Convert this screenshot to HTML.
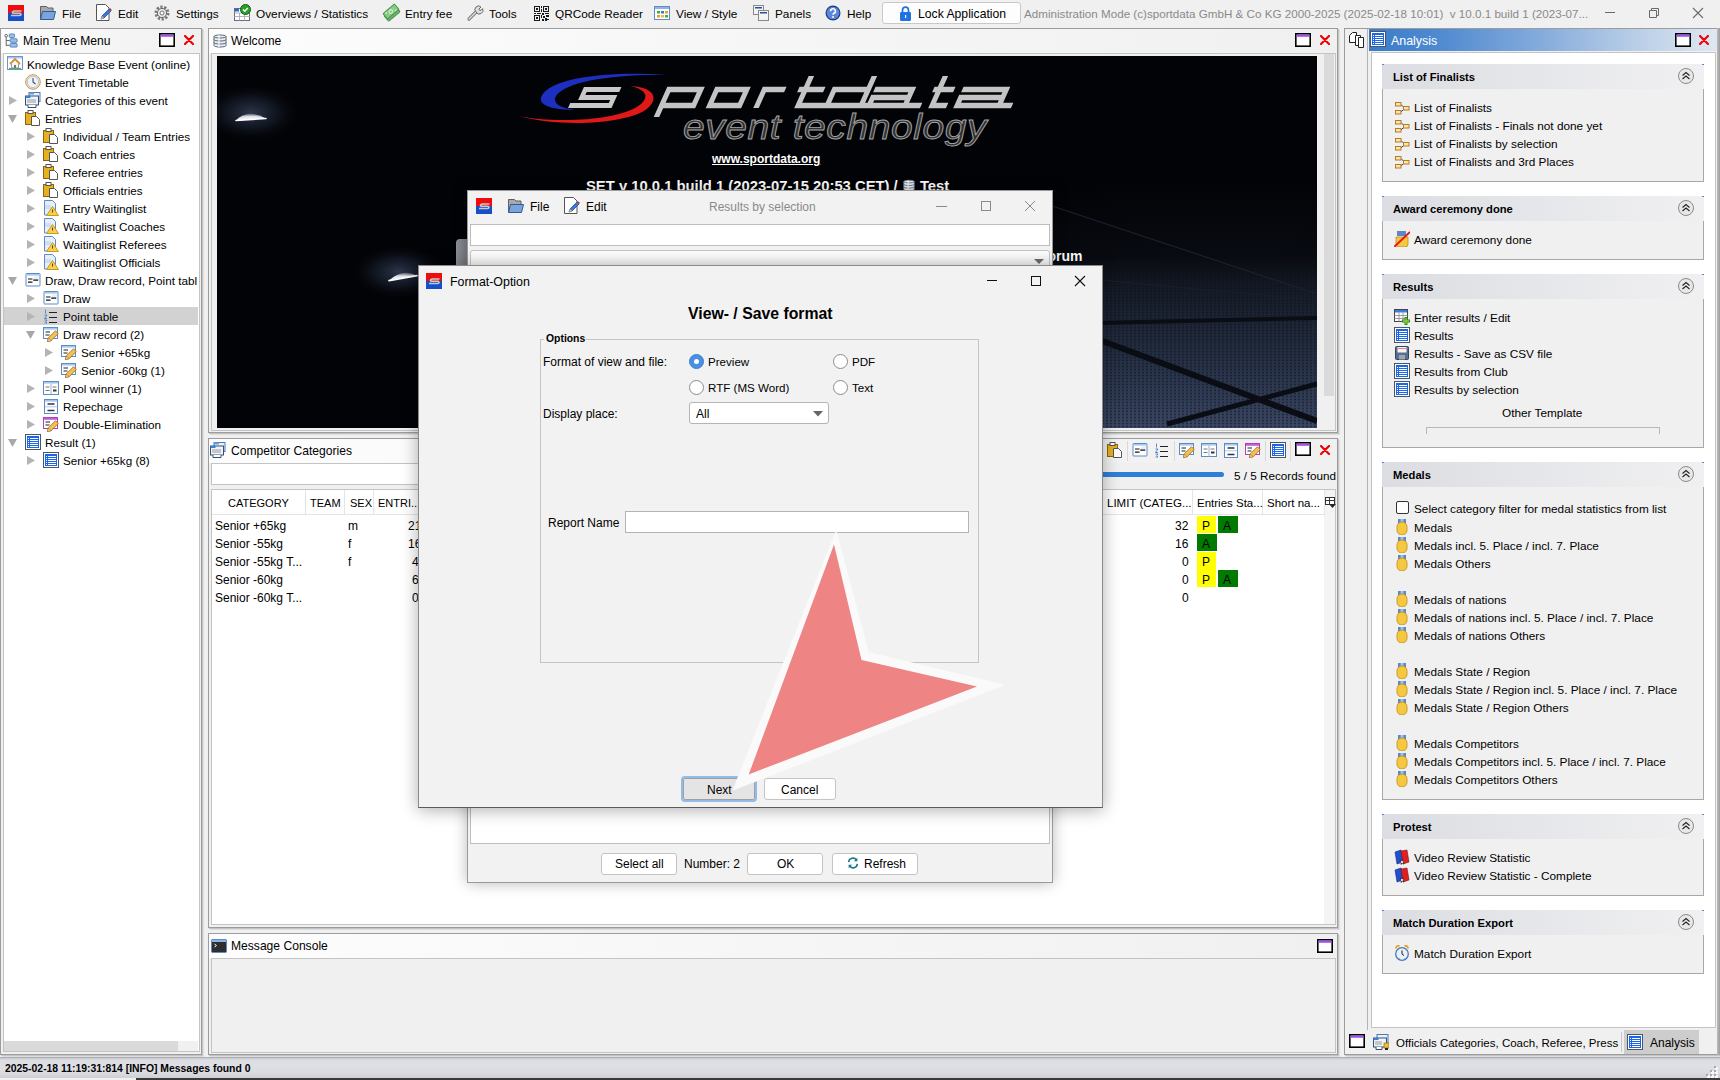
<!DOCTYPE html>
<html><head><meta charset="utf-8">
<style>
*{box-sizing:border-box;margin:0;padding:0}
html,body{width:1720px;height:1080px;overflow:hidden;background:#f0f0f0;font-family:"Liberation Sans",sans-serif;font-size:12px;color:#000}
.a{position:absolute}
.t{position:absolute;white-space:nowrap;line-height:14px}
.ic{position:absolute;width:16px;height:16px}
svg{position:absolute;overflow:visible}
.panel{position:absolute;background:#f0f0f0;border:1px solid #9c9c9c;box-shadow:1px 1px 0 #c4c4c4,2px 2px 0 #dedede}
.phdr{position:absolute;left:0;right:0;top:0;height:24px;background:linear-gradient(90deg,#fdfdfd 0%,#f8f8f8 35%,#f0f0f0 100%)}
.box{position:absolute;border:1px solid #c4c4c4;background:#fff}
.maxi{position:absolute;width:16px;height:14px;border:2px solid #000;background:#fff}
.maxi:before{content:"";position:absolute;left:0;right:0;top:0;height:3px;background:#a64ff0}
</style></head><body>
<svg width="0" height="0" style="position:absolute">
<defs>
<symbol id="i-tree" viewBox="0 0 16 16"><path d="M2.5 3v11M2.5 8h4M2.5 13.5h4" stroke="#555" fill="none"/><circle cx="2.5" cy="2.5" r="1.5" fill="#fff" stroke="#555"/><rect x="6" y="0.5" width="6" height="4" rx="1" fill="#9cc0ec" stroke="#4a7ab8"/><rect x="7" y="6" width="8" height="4" rx="1" fill="#9cc0ec" stroke="#4a7ab8"/><rect x="7" y="11.5" width="8" height="4" rx="1" fill="#9cc0ec" stroke="#4a7ab8"/></symbol>
<symbol id="i-house" viewBox="0 0 16 16"><rect x=".5" y=".5" width="15" height="13" fill="#fff" stroke="#6b96d0"/><rect x="1" y="1" width="14" height="1.5" fill="#a9c6ee"/><path d="M3 8l5-5 5 5" stroke="#d8893a" stroke-width="1.8" fill="none"/><path d="M4.5 8v4h7V8" fill="#f4f4f4" stroke="#888" stroke-width=".8"/><rect x="7" y="9" width="2" height="3" fill="#777"/><path d="M2 12.5h12" stroke="#5ab05a" stroke-width="1.2"/></symbol>
<symbol id="i-clock" viewBox="0 0 16 16"><circle cx="8" cy="8" r="7.3" fill="#f2e3c8" stroke="#c9965a"/><circle cx="8" cy="8" r="5.6" fill="#eef4fb" stroke="#9bb0c8" stroke-width=".6"/><path d="M8 4v4l2.5 2" stroke="#34506e" stroke-width="1.1" fill="none"/></symbol>
<symbol id="i-cats" viewBox="0 0 16 16"><rect x="4" y=".5" width="11" height="9" fill="#e8f0fa" stroke="#4a7ab8"/><rect x="4" y=".5" width="5" height="2" fill="#6aa0e0"/><rect x=".5" y="4" width="13" height="9" fill="#f0f4fa" stroke="#34506e"/><rect x=".5" y="4" width="5" height="2" fill="#3b80d8"/><path d="M2 8h9M2 10h9" stroke="#999"/><path d="M3 13v2.5h8V13" fill="#fff" stroke="#34506e"/></symbol>
<symbol id="i-clip" viewBox="0 0 16 16"><rect x=".5" y="2.5" width="10" height="12" fill="#e8b020" stroke="#8a6410"/><rect x="3" y=".5" width="5" height="3" fill="#fff" stroke="#555"/><path d="M6.5 6.5h5l3 3v6h-8z" fill="#fff" stroke="#555"/></symbol>
<symbol id="i-wait" viewBox="0 0 16 16"><path d="M1.5 .5h8l3 3v11.5h-11z" fill="#e6eefa" stroke="#5b8bc8"/><path d="M2 6h6M2 8h6" stroke="#b8cce8"/><path d="M9.5 6.5l6 9h-12z" fill="#f8d050" stroke="#c89a20"/><path d="M9.5 9.5v3" stroke="#604010"/></symbol>
<symbol id="i-draw" viewBox="0 0 16 16"><rect x="1" y="1.5" width="14" height="12.5" rx=".5" fill="#fff" stroke="#5b8bc8"/><rect x="1.5" y="2" width="13" height="1.6" fill="#a9c6ee"/><rect x="9" y="4.5" width="5" height="4" fill="#e6eef8"/><path d="M3 7h4.5M8.2 8.2h5M3 10.2h4.5" stroke="#111" stroke-width="1.2"/></symbol>
<symbol id="i-points" viewBox="0 0 16 16"><path d="M6 4.5h8M6 9.5h8M6 14.5h8" stroke="#222" stroke-width="1.1"/><path d="M2.5 1.5v4M1.5 7h2.5l-2.5 3.5h2.5M1.5 12h2.5l-1.2 1.5 1.2 1.5H1.5" stroke="#4a80c8" stroke-width=".9" fill="none"/></symbol>
<symbol id="i-drec" viewBox="0 0 16 16"><rect x=".5" y="1.5" width="14" height="11" fill="#fff" stroke="#5b8bc8"/><rect x="1" y="2" width="13" height="1.6" fill="#a9c6ee"/><path d="M2.5 6h4.5M2.5 9h4" stroke="#222" stroke-width="1.1"/><path d="M4.5 15.5l.8-3.6 7.2-7.2 2.8 2.8-7.2 7.2z" fill="#f4c050" stroke="#9a6a18" stroke-width=".8"/><path d="M4.5 15.5l.8-3.6 2.8 2.8z" fill="#f8e0b0" stroke="#9a6a18" stroke-width=".6"/></symbol>
<symbol id="i-dbl" viewBox="0 0 16 16"><rect x=".5" y="1.5" width="14" height="11" fill="#fff" stroke="#b040c0"/><rect x="1" y="2" width="13" height="1.8" fill="#c060d8"/><path d="M2.5 6h4.5M2.5 9h4" stroke="#222" stroke-width="1.1"/><path d="M4.5 15.5l.8-3.6 7.2-7.2 2.8 2.8-7.2 7.2z" fill="#f4c050" stroke="#9a6a18" stroke-width=".8"/><path d="M4.5 15.5l.8-3.6 2.8 2.8z" fill="#f8e0b0" stroke="#9a6a18" stroke-width=".6"/></symbol>
<symbol id="i-pool" viewBox="0 0 16 16"><rect x=".5" y="1.5" width="15" height="13" fill="#fff" stroke="#5b8bc8"/><rect x="1" y="2" width="14" height="1.6" fill="#a9c6ee"/><path d="M8 3.5v11" stroke="#9ab4d8"/><path d="M2.5 7h4M2.5 10.5h4M9.5 7h4" stroke="#777"/><rect x="10" y="9.5" width="3.5" height="2" fill="#333"/></symbol>
<symbol id="i-rep" viewBox="0 0 16 16"><rect x="1.5" y="1.5" width="13" height="14" fill="#fff" stroke="#5b8bc8"/><rect x="2" y="2" width="12" height="1.6" fill="#a9c6ee"/><rect x="2" y="8" width="12" height="1.4" fill="#c4d8f2"/><path d="M4.5 6h7M4.5 12.5h7" stroke="#333" stroke-width="1.4"/></symbol>
<symbol id="i-result" viewBox="0 0 16 16"><rect x=".5" y=".5" width="15" height="15" fill="#fff" stroke="#4a5666"/><rect x="2" y="2" width="12" height="12" fill="#1a66e6"/><path d="M3 4.5h1M5 4.5h8M3 6.5h1M5 6.5h8M3 8.5h1M5 8.5h8M3 10.5h1M5 10.5h8M3 12.5h1M5 12.5h8" stroke="#fff" stroke-width="1"/></symbol>
<symbol id="i-arrR" viewBox="0 0 8 9"><path d="M0 0l8 4.5-8 4.5z" fill="#b4b4b4"/></symbol>
<symbol id="i-arrD" viewBox="0 0 9 8"><path d="M0 0h9l-4.5 8z" fill="#a8a8a8"/></symbol>
<symbol id="i-db" viewBox="0 0 16 16"><path d="M2 3.5c0-2 12-2 12 0v9c0 2-12 2-12 0z" fill="#e8ecf0" stroke="#5a6a7a"/><path d="M2 3.5c0 2 12 2 12 0M2 6.5c0 2 12 2 12 0M2 9.5c0 2 12 2 12 0" stroke="#5a6a7a" fill="none"/><path d="M7 2v12" stroke="#fff" stroke-width="1.5" opacity=".7"/></symbol>
<symbol id="i-x" viewBox="0 0 10 10"><path d="M1 1l8 8M9 1l-8 8" stroke="#f00000" stroke-width="2.2" stroke-linecap="round"/></symbol>
<symbol id="i-max" viewBox="0 0 16 14"><rect x=".8" y=".8" width="14.4" height="12.4" fill="#fff" stroke="#000" stroke-width="1.6"/><rect x="1.6" y="1.6" width="12.8" height="2.2" fill="#a64ff0"/></symbol>
<symbol id="i-console" viewBox="0 0 16 14"><rect x=".5" y=".5" width="15" height="13" rx="1" fill="#2e2e2e" stroke="#5b8bc8"/><rect x="1" y="1" width="14" height="2" fill="#8fb4e0"/><path d="M3.5 5l2 1.5-2 1.5" stroke="#fff" fill="none"/></symbol>
<symbol id="i-fin" viewBox="0 0 16 16"><path d="M7 5.5l2.5 2.5M7 13l2.5-2.5" stroke="#1a4a9a" stroke-width="1"/><rect x="1.5" y="3.5" width="5.5" height="3.5" fill="#fbe7a0" stroke="#b8782a"/><rect x="9.5" y="7.5" width="5.5" height="3.5" fill="#fbe7a0" stroke="#b8782a"/><rect x="1.5" y="11.5" width="5.5" height="3.5" fill="#fbe7a0" stroke="#b8782a"/></symbol>
<symbol id="i-medal" viewBox="0 0 16 16"><rect x="4" y="0" width="8" height="5" fill="#5a88c8"/><rect x="6.5" y="0" width="3" height="5" fill="#9ec0f0"/><path d="M3 7.5a5 4.5 0 0 1 10 0v4a5 4.5 0 0 1-10 0z" fill="#f4c840" stroke="#c08a10" stroke-width=".8"/></symbol>
<symbol id="i-csv" viewBox="0 0 16 16"><rect x="1.5" y="1.5" width="13" height="13" rx="1" fill="#5a6e90" stroke="#34445e"/><rect x="3.5" y="2" width="9" height="5.5" fill="#f4f4f4"/><rect x="3.5" y="3" width="9" height="1" fill="#e88080"/><rect x="5" y="10" width="6" height="4.5" fill="#9aa4b4"/></symbol>
<symbol id="i-enter" viewBox="0 0 16 16"><rect x=".5" y=".5" width="13" height="12" fill="#fff" stroke="#444"/><rect x="1" y="1" width="12" height="2.5" fill="#3b80d8"/><path d="M.5 6.5h13M.5 9.5h13M5 3.5v9M9 3.5v9" stroke="#888" stroke-width=".8"/><path d="M12 8v8M8 12h8" stroke="#2a8a1a" stroke-width="3"/><path d="M12 9v6M9 12h6" stroke="#8ad040" stroke-width="1.3"/></symbol>
<symbol id="i-award" viewBox="0 0 16 16"><rect x="3" y="0" width="9" height="5" fill="#5a88c8"/><path d="M2 6h12v7a3 3 0 0 1-3 3H5a3 3 0 0 1-3-3z" fill="#f4c840" stroke="#c08a10" stroke-width=".8"/><path d="M0 16L16 1" stroke="#f01010" stroke-width="2"/></symbol>
<symbol id="i-video" viewBox="0 0 16 16"><path d="M1 3l6-2 2 12-6 2z" fill="#2050d0" stroke="#102a80" stroke-width=".6"/><path d="M7 2l6-1 2 12-6 2z" fill="#e02020" stroke="#801010" stroke-width=".6"/><path d="M6 11l4 4M9 10.5l-2 5" stroke="#333" stroke-width="1.3"/><circle cx="8" cy="13" r="1.2" fill="#ddd"/></symbol>
<symbol id="i-alarm" viewBox="0 0 16 16"><circle cx="8" cy="9" r="6.3" fill="#e8f0fa" stroke="#4a7ab8" stroke-width="1.3"/><path d="M2 3.5a2.5 2.5 0 0 1 3.5-2.5M14 3.5a2.5 2.5 0 0 0-3.5-2.5" stroke="#e8a020" stroke-width="1.8" fill="none"/><path d="M8 5.5v3.5l2 1.5" stroke="#222" fill="none"/><path d="M4 15l1.5-1.5M12 15l-1.5-1.5" stroke="#4a7ab8"/></symbol>
<symbol id="i-collapse" viewBox="0 0 16 16"><circle cx="8" cy="8" r="7.5" fill="#e8e8e8" stroke="#8a8a8a"/><path d="M4.5 7.5l3.5-3 3.5 3M4.5 11l3.5-3 3.5 3" stroke="#222" stroke-width="1.1" fill="none"/></symbol>
<symbol id="i-copy" viewBox="0 0 16 16"><path d="M3.5 .5h4v10h-7v-7z" fill="#fff" stroke="#222"/><path d="M6.5 3.5h5v10h-5z" fill="#fff" stroke="#222"/><path d="M9.5 5.5h5v10h-5z" fill="#fff" stroke="#222"/></symbol>
<symbol id="i-offcats" viewBox="0 0 16 16"><rect x="4" y=".5" width="11" height="9" fill="#e8f0fa" stroke="#4a7ab8"/><rect x=".5" y="4" width="13" height="9" fill="#f0f4fa" stroke="#34506e"/><rect x=".5" y="4" width="5" height="2" fill="#3b80d8"/><path d="M2 8h7M2 10h7" stroke="#999"/><path d="M3 13v2.5h6V13" fill="#fff" stroke="#34506e"/><rect x="11" y="9" width="5" height="5" fill="#f0c030" stroke="#806010" stroke-width=".6"/><path d="M12 14v2h3v-2" fill="#222"/></symbol>
<symbol id="i-refresh" viewBox="0 0 16 16"><path d="M3 7a5 5 0 0 1 9-2.5" stroke="#1a7a8a" stroke-width="1.8" fill="none"/><path d="M13 2v4h-4z" fill="#1a7a8a"/><path d="M13 9a5 5 0 0 1-9 2.5" stroke="#1a7a8a" stroke-width="1.8" fill="none"/><path d="M3 14v-4h4z" fill="#1a7a8a"/></symbol>
<symbol id="i-colch" viewBox="0 0 11 11"><rect x=".5" y=".5" width="9" height="7" fill="#fff" stroke="#333"/><path d="M.5 3.5h9M4.5 .5v7" stroke="#333"/><path d="M4 7h7l-3.5 4z" fill="#222"/></symbol>
<symbol id="i-logo" viewBox="0 0 16 16"><rect width="16" height="8" fill="#f00c0c"/><rect y="8" width="16" height="8" fill="#1450c8"/><path d="M3 10.5h8.5c1.5 0 2-1 1.2-1.7L12 8.2h-6.5c-1.2 0-1.4-1.2-.4-1.6L6 6h7.5" stroke="#c8c8c8" stroke-width="1.6" fill="none"/></symbol>
<symbol id="i-folder" viewBox="0 0 16 16"><path d="M0.5 14.5V1.5h6l1.5 1.5h5v3" fill="#a8a8a8" stroke="#606060"/><path d="M0.5 14.5l2-8h13l-2 8z" fill="#7aa5dc" stroke="#2d5c9c"/></symbol>
<symbol id="i-edit" viewBox="0 0 16 17"><path d="M0.5 0.5h9l3.5 3.5v12.5h-12.5z" fill="#fff" stroke="#555"/><path d="M5 15l1-3 7-7 2 2-7 7z" fill="#3b78d8" stroke="#1d4a9a" stroke-width=".8"/><path d="M13 5l2 2 1-1-2-2z" fill="#e03030"/><path d="M5 15l1-3 2 2z" fill="#f0c070"/></symbol>
</defs></svg>

<!-- MENU BAR -->
<div id="menubar" class="a" style="left:0;top:0;width:1720px;height:28px;background:#f0f0f0">
  <svg style="left:8px;top:5px" width="16" height="16" viewBox="0 0 16 16"><rect width="16" height="8" fill="#f00c0c"/><rect y="8" width="16" height="8" fill="#1450c8"/><path d="M3 10.5h8.5c1.5 0 2-1 1.2-1.7L12 8.2h-6.5c-1.2 0-1.4-1.2-.4-1.6L6 6h7.5" stroke="#c8c8c8" stroke-width="1.6" fill="none"/></svg>
  <svg style="left:40px;top:5px" width="16" height="16" viewBox="0 0 16 16"><path d="M0.5 14.5V1.5h6l1.5 1.5h5v3" fill="#a8a8a8" stroke="#606060"/><path d="M0.5 14.5l2-8h13l-2 8z" fill="#7aa5dc" stroke="#2d5c9c"/></svg>
  <div class="t" style="top:7px;left:62px;font-size:11.8px">File</div>
  <svg style="left:96px;top:4px" width="16" height="17" viewBox="0 0 16 17"><path d="M0.5 0.5h9l3.5 3.5v12.5h-12.5z" fill="#fff" stroke="#555"/><path d="M5 15l1-3 7-7 2 2-7 7z" fill="#3b78d8" stroke="#1d4a9a" stroke-width=".8"/><path d="M13 5l2 2 1-1-2-2z" fill="#e03030"/><path d="M5 15l1-3 2 2z" fill="#f0c070"/></svg>
  <div class="t" style="top:7px;left:118px;font-size:11.8px">Edit</div>
  <svg style="left:154px;top:5px" width="16" height="16" viewBox="0 0 16 16"><circle cx="8" cy="8" r="6" fill="none" stroke="#7a7a7a" stroke-width="3" stroke-dasharray="2.2 1.5"/><circle cx="8" cy="8" r="4.6" fill="#e8e8e8" stroke="#6a6a6a"/><circle cx="8" cy="8" r="2" fill="#fff" stroke="#777"/></svg>
  <div class="t" style="top:7px;left:176px;font-size:11.8px">Settings</div>
  <svg style="left:234px;top:4px" width="17" height="17" viewBox="0 0 17 17"><rect x=".5" y="4.5" width="15" height="12" fill="#fff" stroke="#6a6a7a"/><path d="M.5 9h15M.5 12.5h15M5.5 9v7.5M10.5 9v7.5" stroke="#b0b4c0"/><rect x="1" y="5" width="4" height="2.5" fill="#2a6ad8"/><circle cx="11.5" cy="5.5" r="5" fill="#2aa02a" stroke="#106010"/><path d="M9 5.5l1.8 1.8 3-3.3" stroke="#fff" stroke-width="1.4" fill="none"/></svg>
  <div class="t" style="top:7px;left:256px;font-size:11.8px">Overviews / Statistics</div>
  <svg style="left:383px;top:5px" width="17" height="16" viewBox="0 0 17 16"><g transform="rotate(-40 8.5 8)"><rect x="1" y="5.5" width="15" height="7" rx="1" fill="#6ab86a" stroke="#4a944a"/><rect x="1.5" y="3" width="15" height="7" rx="1" fill="#8acb8a" stroke="#4a944a"/><circle cx="9" cy="6.5" r="1.8" fill="none" stroke="#d8f0d8"/><path d="M3.5 4.5h2M12.5 8.5h2" stroke="#d8f0d8"/></g></svg>
  <div class="t" style="top:7px;left:405px;font-size:11.8px">Entry fee</div>
  <svg style="left:467px;top:5px" width="16" height="16" viewBox="0 0 16 16"><path d="M2 14l7-7" stroke="#777" stroke-width="3.2" stroke-linecap="round"/><path d="M2 14l7-7" stroke="#ddd" stroke-width="1.4" stroke-linecap="round"/><path d="M9 7a3.5 3.5 0 1 1 5-5l-2.2 2.2.8 1.2 1.4-.2 1.6-1.6A3.5 3.5 0 0 1 9 7z" fill="#e0e0e0" stroke="#6a6a6a"/></svg>
  <div class="t" style="top:7px;left:489px;font-size:11.8px">Tools</div>
  <svg style="left:534px;top:6px" width="15" height="15" viewBox="0 0 15 15"><path d="M0 0h6v6h-6zM1 1v4h4v-4zM2 2h2v2h-2zM9 0h6v6h-6zM10 1v4h4v-4zM11 2h2v2h-2zM0 9h6v6h-6zM1 10v4h4v-4zM2 11h2v2h-2zM7 0h1v2h-1zM7 3h1v3h-1zM0 7h2v1h-2zM3 7h4v1h-4zM8 7h2v2h-2zM11 7h4v1h-4zM7 9h1v3h-1zM9 10h2v2h-2zM12 9h3v2h-3zM8 13h2v2h-2zM11 12h2v3h-2zM13 13h2v1h-2z" fill="#1a1a1a" fill-rule="evenodd"/></svg>
  <div class="t" style="top:7px;left:555px;font-size:11.8px">QRCode Reader</div>
  <svg style="left:654px;top:6px" width="16" height="14" viewBox="0 0 16 14"><rect x=".5" y=".5" width="15" height="13" fill="#fff" stroke="#5b8bc8"/><rect x="1" y="1" width="14" height="2" fill="#8fb4e0"/><rect x="3" y="5" width="3" height="2.5" fill="#4aa84a"/><rect x="7" y="5" width="3" height="2.5" fill="#3b78d8"/><rect x="11" y="5" width="3" height="2.5" fill="#e8a030"/><rect x="3" y="9" width="3" height="2.5" fill="#e8a030"/><rect x="7" y="9" width="3" height="2.5" fill="#e8c030"/><rect x="11" y="9" width="3" height="2.5" fill="#4aa84a"/></svg>
  <div class="t" style="top:7px;left:676px;font-size:11.8px">View / Style</div>
  <svg style="left:753px;top:5px" width="16" height="16" viewBox="0 0 16 16"><rect x=".5" y=".5" width="10" height="9" fill="#f4f4f4" stroke="#888"/><rect x="2" y="2" width="7" height="1.5" fill="#2a4f9a"/><rect x="5.5" y="5.5" width="10" height="10" fill="#f4f4f4" stroke="#888"/><rect x="7" y="7" width="7" height="1.5" fill="#2a4f9a"/></svg>
  <div class="t" style="top:7px;left:775px;font-size:11.8px">Panels</div>
  <svg style="left:825px;top:5px" width="16" height="16" viewBox="0 0 16 16"><circle cx="8" cy="8" r="7.5" fill="#1c3d8a"/><circle cx="8" cy="8" r="6.3" fill="#5d86d8"/><path d="M5.6 6.2a2.4 2.4 0 1 1 3.4 2.1c-.7.4-1 .8-1 1.5" stroke="#fff" stroke-width="1.6" fill="none"/><circle cx="8" cy="12" r="1" fill="#fff"/></svg>
  <div class="t" style="top:7px;left:847px;font-size:11.8px">Help</div>
  <div class="a" style="left:882px;top:2px;width:139px;height:22px;background:#fdfdfd;border:1px solid #c9c9c9;border-radius:3px"></div>
  <svg style="left:900px;top:6px" width="11" height="15" viewBox="0 0 11 15"><path d="M2.5 6.5V4.2a3 3 0 0 1 6 0v2.3" stroke="#1f73e0" stroke-width="1.7" fill="none"/><rect x="0" y="6" width="11" height="9" rx="1.2" fill="#1f73e0"/><rect x="5" y="9" width="1.2" height="3" fill="#fff"/></svg>
  <div class="t" style="top:7px;left:918px;font-size:12.2px">Lock Application</div>
  <div class="t" style="top:7px;left:1024px;color:#8a8a8a;font-size:11.65px">Administration Mode (c)sportdata GmbH &amp; Co KG 2000-2025 (2025-02-18 10:01)&nbsp; v 10.0.1 build 1 (2023-07...</div>
  <div class="a" style="left:1605px;top:12px;width:10px;height:1px;background:#6a6a6a"></div>
  <svg style="left:1649px;top:8px" width="10" height="10" viewBox="0 0 10 10"><path d="M.5 2.5h7v7h-7z M2.5 2.5v-2h7v7h-2" stroke="#6a6a6a" fill="none"/></svg>
  <svg style="left:1693px;top:8px" width="10" height="10" viewBox="0 0 10 10"><path d="M0 0l10 10M10 0l-10 10" stroke="#6a6a6a" stroke-width="1.1"/></svg>
</div>

<!-- LEFT PANEL -->
<div class="panel" style="left:0;top:28px;width:202px;height:1027px">
  <div class="phdr"></div>
  <svg class="ic" style="left:3px;top:4px;width:14px;height:15px"><use href="#i-tree"/></svg>
  <div class="t" style="left:22px;top:5px;font-size:12.1px">Main Tree Menu</div>
  <svg style="left:158px;top:4px" width="16" height="14"><use href="#i-max"/></svg>
  <svg style="left:183px;top:6px" width="10" height="10"><use href="#i-x"/></svg>
  <div class="box" style="left:2px;top:24px;width:197px;height:999px;overflow:hidden">
  </div>
  <div class="a" style="left:3px;top:1012px;width:194px;height:10px;background:#f0f0f0"></div>
  <div class="a" style="left:3px;top:1012px;width:174px;height:10px;background:#dadada"></div>
  <svg class="ic" style="left:6px;top:27px"><use href="#i-house"/></svg>
<div class="t" style="left:26px;top:29px;font-size:11.7px">Knowledge Base Event (online)</div>
<svg class="ic" style="left:24px;top:45px"><use href="#i-clock"/></svg>
<div class="t" style="left:44px;top:47px;font-size:11.7px">Event Timetable</div>
<svg style="left:8px;top:67px" width="8" height="9"><use href="#i-arrR"/></svg>
<svg class="ic" style="left:24px;top:63px"><use href="#i-cats"/></svg>
<div class="t" style="left:44px;top:65px;font-size:11.7px">Categories of this event</div>
<svg style="left:7px;top:86px" width="9" height="8"><use href="#i-arrD"/></svg>
<svg class="ic" style="left:24px;top:81px"><use href="#i-clip"/></svg>
<div class="t" style="left:44px;top:83px;font-size:11.7px">Entries</div>
<svg style="left:26px;top:103px" width="8" height="9"><use href="#i-arrR"/></svg>
<svg class="ic" style="left:42px;top:99px"><use href="#i-clip"/></svg>
<div class="t" style="left:62px;top:101px;font-size:11.7px">Individual / Team Entries</div>
<svg style="left:26px;top:121px" width="8" height="9"><use href="#i-arrR"/></svg>
<svg class="ic" style="left:42px;top:117px"><use href="#i-clip"/></svg>
<div class="t" style="left:62px;top:119px;font-size:11.7px">Coach entries</div>
<svg style="left:26px;top:139px" width="8" height="9"><use href="#i-arrR"/></svg>
<svg class="ic" style="left:42px;top:135px"><use href="#i-clip"/></svg>
<div class="t" style="left:62px;top:137px;font-size:11.7px">Referee entries</div>
<svg style="left:26px;top:157px" width="8" height="9"><use href="#i-arrR"/></svg>
<svg class="ic" style="left:42px;top:153px"><use href="#i-clip"/></svg>
<div class="t" style="left:62px;top:155px;font-size:11.7px">Officials entries</div>
<svg style="left:26px;top:175px" width="8" height="9"><use href="#i-arrR"/></svg>
<svg class="ic" style="left:42px;top:171px"><use href="#i-wait"/></svg>
<div class="t" style="left:62px;top:173px;font-size:11.7px">Entry Waitinglist</div>
<svg style="left:26px;top:193px" width="8" height="9"><use href="#i-arrR"/></svg>
<svg class="ic" style="left:42px;top:189px"><use href="#i-wait"/></svg>
<div class="t" style="left:62px;top:191px;font-size:11.7px">Waitinglist Coaches</div>
<svg style="left:26px;top:211px" width="8" height="9"><use href="#i-arrR"/></svg>
<svg class="ic" style="left:42px;top:207px"><use href="#i-wait"/></svg>
<div class="t" style="left:62px;top:209px;font-size:11.7px">Waitinglist Referees</div>
<svg style="left:26px;top:229px" width="8" height="9"><use href="#i-arrR"/></svg>
<svg class="ic" style="left:42px;top:225px"><use href="#i-wait"/></svg>
<div class="t" style="left:62px;top:227px;font-size:11.7px">Waitinglist Officials</div>
<svg style="left:7px;top:248px" width="9" height="8"><use href="#i-arrD"/></svg>
<svg class="ic" style="left:24px;top:243px"><use href="#i-draw"/></svg>
<div class="t" style="left:44px;top:245px;font-size:11.7px">Draw, Draw record, Point tabl</div>
<svg style="left:26px;top:265px" width="8" height="9"><use href="#i-arrR"/></svg>
<svg class="ic" style="left:42px;top:261px"><use href="#i-draw"/></svg>
<div class="t" style="left:62px;top:263px;font-size:11.7px">Draw</div>
<div class="a" style="left:3px;top:278px;width:194px;height:18px;background:#d2d2d2"></div>
<svg style="left:26px;top:283px" width="8" height="9"><use href="#i-arrR"/></svg>
<svg class="ic" style="left:42px;top:279px"><use href="#i-points"/></svg>
<div class="t" style="left:62px;top:281px;font-size:11.7px">Point table</div>
<svg style="left:25px;top:302px" width="9" height="8"><use href="#i-arrD"/></svg>
<svg class="ic" style="left:42px;top:297px"><use href="#i-drec"/></svg>
<div class="t" style="left:62px;top:299px;font-size:11.7px">Draw record (2)</div>
<svg style="left:44px;top:319px" width="8" height="9"><use href="#i-arrR"/></svg>
<svg class="ic" style="left:60px;top:315px"><use href="#i-drec"/></svg>
<div class="t" style="left:80px;top:317px;font-size:11.7px">Senior +65kg</div>
<svg style="left:44px;top:337px" width="8" height="9"><use href="#i-arrR"/></svg>
<svg class="ic" style="left:60px;top:333px"><use href="#i-drec"/></svg>
<div class="t" style="left:80px;top:335px;font-size:11.7px">Senior -60kg (1)</div>
<svg style="left:26px;top:355px" width="8" height="9"><use href="#i-arrR"/></svg>
<svg class="ic" style="left:42px;top:351px"><use href="#i-pool"/></svg>
<div class="t" style="left:62px;top:353px;font-size:11.7px">Pool winner (1)</div>
<svg style="left:26px;top:373px" width="8" height="9"><use href="#i-arrR"/></svg>
<svg class="ic" style="left:42px;top:369px"><use href="#i-rep"/></svg>
<div class="t" style="left:62px;top:371px;font-size:11.7px">Repechage</div>
<svg style="left:26px;top:391px" width="8" height="9"><use href="#i-arrR"/></svg>
<svg class="ic" style="left:42px;top:387px"><use href="#i-dbl"/></svg>
<div class="t" style="left:62px;top:389px;font-size:11.7px">Double-Elimination</div>
<svg style="left:7px;top:410px" width="9" height="8"><use href="#i-arrD"/></svg>
<svg class="ic" style="left:24px;top:405px"><use href="#i-result"/></svg>
<div class="t" style="left:44px;top:407px;font-size:11.7px">Result (1)</div>
<svg style="left:26px;top:427px" width="8" height="9"><use href="#i-arrR"/></svg>
<svg class="ic" style="left:42px;top:423px"><use href="#i-result"/></svg>
<div class="t" style="left:62px;top:425px;font-size:11.7px">Senior +65kg (8)</div>
</div>

<!-- WELCOME PANEL -->
<div class="panel" style="left:208px;top:28px;width:1130px;height:405px">
  <div class="phdr"></div>
  <svg class="ic" style="left:3px;top:4px"><use href="#i-db"/></svg>
  <div class="t" style="left:22px;top:5px;font-size:12.1px">Welcome</div>
  <svg style="left:1086px;top:4px" width="16" height="14"><use href="#i-max"/></svg>
  <svg style="left:1111px;top:6px" width="10" height="10"><use href="#i-x"/></svg>
  <div class="box" style="left:2px;top:24px;width:1125px;height:378px;background:#f0f0f0"></div>
  <div class="a" style="left:1115px;top:25px;width:10px;height:342px;background:#dadada"></div>
  <div id="wimg" class="a" style="left:8px;top:27px;width:1100px;height:372px;background:#020306;overflow:hidden">
    <div class="a" style="left:0;top:0;width:1100px;height:372px;background:radial-gradient(ellipse 500px 250px at 1000px 372px,rgba(40,52,78,.9),rgba(20,26,40,.5) 55%,rgba(0,0,0,0) 100%)"></div>
    <svg style="left:0;top:0" width="1100" height="372" viewBox="0 0 1100 372">
      <defs>
        <pattern id="mesh" width="4" height="3" patternUnits="userSpaceOnUse"><rect width="4" height="3" fill="none"/><circle cx="2" cy="1.5" r=".9" fill="#0a0e16" opacity=".6"/></pattern>
        <linearGradient id="floorg" x1="0" y1="0" x2="0" y2="1"><stop offset="0" stop-color="#07090e"/><stop offset=".22" stop-color="#161c28"/><stop offset=".6" stop-color="#252f44"/><stop offset="1" stop-color="#3a4764"/></linearGradient>
        <radialGradient id="flare"><stop offset="0" stop-color="#fff"/><stop offset=".35" stop-color="#d8dde8"/><stop offset="1" stop-color="#000" stop-opacity="0"/></radialGradient>
        <radialGradient id="glow"><stop offset="0" stop-color="#5a6c90" stop-opacity=".5"/><stop offset=".5" stop-color="#2a3650" stop-opacity=".35"/><stop offset="1" stop-color="#000" stop-opacity="0"/></radialGradient><radialGradient id="dome" cx=".5" cy="1" r="1"><stop offset="0" stop-color="#fff"/><stop offset=".6" stop-color="#dde1e8"/><stop offset="1" stop-color="#8a94a8" stop-opacity=".5"/></radialGradient>
      </defs>
      <path d="M540 212 L1100 198 L1100 372 L500 372 Z" fill="url(#floorg)"/>
      <path d="M540 212 L1100 198 L1100 372 L500 372 Z" fill="url(#mesh)"/>
      <path d="M835 150 L1100 238" stroke="#1c212b" stroke-width="1.2"/>
      <path d="M860 222 L1100 244" stroke="#1a202a" stroke-width="1"/>
      <path d="M880 267 L1100 262" stroke="#0a0d14" stroke-width="4"/>
      <path d="M880 283 L1100 365" stroke="#0a0d14" stroke-width="6"/>
      <path d="M1100 328 L950 368" stroke="#0a0d14" stroke-width="5"/>
      <ellipse cx="34" cy="57" rx="52" ry="30" fill="url(#glow)"/>
      <path d="M19 64.5 Q 30 52, 49 62.5 Z" fill="url(#dome)"/><path d="M19 64.5 L49 62.5" stroke="#fff" stroke-width="1.6" stroke-linecap="round"/>
      <ellipse cx="182" cy="216" rx="50" ry="28" fill="url(#glow)"/>
      <path d="M172 224.6 Q 185 212, 200 219.6 Z" fill="url(#dome)"/><path d="M172 224.6 L200 219.6" stroke="#fff" stroke-width="1.6" stroke-linecap="round"/>
      <ellipse cx="450" cy="230" rx="70" ry="25" fill="url(#glow)"/>
      <!-- logo -->
      <g transform="translate(-217,-56)">
        <path d="M541 98 C 545 80, 600 70, 667 75 C 610 74, 565 82, 556 96 C 552 103, 560 108, 575 110 C 555 110, 539 106, 541 98 Z" fill="#1c2fc0"/>
        <path d="M519 116 C 550 123, 620 122, 641 104 C 650 96, 645 89, 630 86 C 652 87, 660 97, 648 108 C 630 124, 560 128, 519 116 Z" fill="#e01818"/>
        <g transform="matrix(1,0,-0.45,1,48.6,0)" fill="none" stroke-linejoin="miter">
          <path d="M612 89.5 H577 V97.5 H609 V105.5 H568" stroke="#c8c8c8" stroke-width="5"/>
          <path d="M660.5 117 V89.5 H692.5 V105.5 H663 M708.5 89.5 H738.5 V105.5 H708.5 Z M756 108 V89.5 H777 M797 76 V105.5 H920 M790 89.5 H816 M860 76 V105.5 H826 V89.5 H860 M866 89.5 H904 V105.5 H868 V97.5 H904 M931 76 V105.5 H946 M925 89.5 H946 M954 89.5 H998 V105.5 H956 V97.5 H998 M998 105.5 H1011" stroke="#c4c4c4" stroke-width="5.5"/>
          
        </g>
      </g>
    </svg>
        <div class="t" style="left:466px;top:51px;font-size:35px;line-height:40px;color:#303030;-webkit-text-stroke:0.9px #a4a4a4;font-style:italic;letter-spacing:0.5px;transform:scaleX(1.115);transform-origin:0 0">event technology</div>
    <div class="t" style="left:495px;top:96px;font-size:12px;font-weight:bold;color:#fff;text-decoration:underline">www.sportdata.org</div>
    <div class="t" style="left:369px;top:122px;font-size:14.8px;line-height:16px;font-weight:bold;color:#fff">SET v 10.0.1 build 1 (2023-07-15 20:53 CET) / <svg style="position:relative;display:inline-block;vertical-align:-2px" width="14" height="15"><use href="#i-db"/></svg> Test</div>
    <div class="t" style="left:822px;top:193px;font-size:14px;font-weight:bold;color:#fff">Forum</div>
  </div>
</div>

<!-- COMPETITOR CATEGORIES PANEL -->
<div class="panel" style="left:208px;top:438px;width:1130px;height:490px">
  <div class="phdr"></div>
  <svg class="ic" style="left:1px;top:3px"><use href="#i-cats"/></svg>
  <div class="t" style="left:22px;top:5px;font-size:12.1px">Competitor Categories</div>
  <svg class="ic" style="left:898px;top:3px"><use href="#i-clip"/></svg>
  <div class="a" style="left:918px;top:2px;width:1px;height:20px;background:#d8d8d8"></div>
  <svg class="ic" style="left:923px;top:3px"><use href="#i-draw"/></svg>
  <svg class="ic" style="left:945px;top:3px"><use href="#i-points"/></svg>
  <div class="a" style="left:965px;top:2px;width:1px;height:20px;background:#d8d8d8"></div>
  <svg class="ic" style="left:970px;top:3px"><use href="#i-drec"/></svg>
  <svg class="ic" style="left:992px;top:3px"><use href="#i-pool"/></svg>
  <svg class="ic" style="left:1014px;top:3px"><use href="#i-rep"/></svg>
  <svg class="ic" style="left:1036px;top:3px"><use href="#i-dbl"/></svg>
  <div class="a" style="left:1056px;top:2px;width:1px;height:20px;background:#d8d8d8"></div>
  <svg class="ic" style="left:1061px;top:3px"><use href="#i-result"/></svg>
  <div class="a" style="left:1081px;top:2px;width:1px;height:20px;background:#d8d8d8"></div>
  <svg style="left:1086px;top:3px" width="16" height="14"><use href="#i-max"/></svg>
  <svg style="left:1111px;top:6px" width="10" height="10"><use href="#i-x"/></svg>
  <div class="box" style="left:2px;top:24px;width:880px;height:22px"></div>
  <div class="a" style="left:880px;top:33px;width:135px;height:5px;border-radius:3px;background:#2f7fd8"></div>
  <div class="t" style="left:1025px;top:30px;font-size:11.7px">5 / 5 Records found</div>
  <div class="box" style="left:2px;top:50px;width:1125px;height:436px"></div>
  <div class="a" style="left:3px;top:51px;width:1112px;height:25px;background:#fff;border-bottom:1px solid #e4e4e4"></div>
  <div class="a" style="left:1115px;top:51px;width:11px;height:434px;background:#f4f4f4"></div>
  <div class="a" style="left:96px;top:51px;width:1px;height:25px;background:#e4e4e4"></div>
  <div class="a" style="left:135px;top:51px;width:1px;height:25px;background:#e4e4e4"></div>
  <div class="a" style="left:164px;top:51px;width:1px;height:25px;background:#e4e4e4"></div>
  <div class="t" style="left:19px;top:57px;font-size:11px">CATEGORY</div>
  <div class="t" style="left:101px;top:57px;font-size:11px">TEAM</div>
  <div class="t" style="left:141px;top:57px;font-size:11px">SEX</div>
  <div class="t" style="left:169px;top:57px;font-size:11px">ENTRI...</div>
  <div class="a" style="left:983px;top:51px;width:1px;height:25px;background:#e4e4e4"></div>
  <div class="a" style="left:1053px;top:51px;width:1px;height:25px;background:#e4e4e4"></div>
  <div class="a" style="left:1115px;top:51px;width:1px;height:25px;background:#e4e4e4"></div>
  <div class="t" style="left:898px;top:57px;font-size:11.5px">LIMIT (CATEG...</div>
  <div class="t" style="left:988px;top:57px;font-size:11.5px">Entries Sta...</div>
  <div class="t" style="left:1058px;top:57px;font-size:11.5px">Short na...</div>
  <svg style="left:1116px;top:58px" width="11" height="11"><use href="#i-colch"/></svg>
  <div class="t" style="left:6px;top:80px">Senior +65kg</div>
  <div class="t" style="left:6px;top:98px">Senior -55kg</div>
  <div class="t" style="left:6px;top:116px">Senior -55kg T...</div>
  <div class="t" style="left:6px;top:134px">Senior -60kg</div>
  <div class="t" style="left:6px;top:152px">Senior -60kg T...</div>
  <div class="t" style="left:139px;top:80px">m</div>
  <div class="t" style="left:139px;top:98px">f</div>
  <div class="t" style="left:139px;top:116px">f</div>
  <div class="t" style="left:199px;top:80px">21</div>
  <div class="t" style="left:199px;top:98px">16</div>
  <div class="t" style="left:203px;top:116px">4</div>
  <div class="t" style="left:203px;top:134px">6</div>
  <div class="t" style="left:203px;top:152px">0</div>
  <div class="t" style="left:966px;top:80px">32</div>
  <div class="t" style="left:966px;top:98px">16</div>
  <div class="t" style="left:973px;top:116px">0</div>
  <div class="t" style="left:973px;top:134px">0</div>
  <div class="t" style="left:973px;top:152px">0</div>
  <div class="a" style="left:988px;top:77px;width:19px;height:17px;background:#ffff00"></div><div class="t" style="left:993px;top:80px">P</div>
  <div class="a" style="left:1009px;top:77px;width:20px;height:17px;background:#007a00"></div><div class="t" style="left:1014px;top:80px">A</div>
  <div class="a" style="left:988px;top:95px;width:20px;height:17px;background:#007a00"></div><div class="t" style="left:993px;top:98px">A</div>
  <div class="a" style="left:988px;top:113px;width:19px;height:18px;background:#ffff00"></div><div class="t" style="left:993px;top:116px">P</div>
  <div class="a" style="left:988px;top:131px;width:19px;height:17px;background:#ffff00"></div><div class="t" style="left:993px;top:134px">P</div>
  <div class="a" style="left:1009px;top:131px;width:20px;height:17px;background:#007a00"></div><div class="t" style="left:1014px;top:134px">A</div>
</div>

<!-- MESSAGE CONSOLE -->
<div class="panel" style="left:208px;top:933px;width:1130px;height:122px">
  <div class="phdr"></div>
  <svg style="left:2px;top:5px" width="16" height="14"><use href="#i-console"/></svg>
  <div class="t" style="left:22px;top:5px;font-size:12.1px">Message Console</div>
  <svg style="left:1108px;top:5px" width="16" height="14"><use href="#i-max"/></svg>
  <div class="box" style="left:2px;top:24px;width:1125px;height:95px;background:#f0f0f0"></div>
</div>

<!-- RIGHT PANEL -->
<div class="panel" style="left:1344px;top:28px;width:376px;height:1027px;border-right:0"></div>
<div class="a" style="left:1717px;top:28px;width:3px;height:1027px;background:linear-gradient(90deg,#bcbcbc,#9c9c9c)"></div>
<div class="a" style="left:1367px;top:29px;width:1px;height:1001px;background:#b4b4b4"></div>
<svg class="ic" style="left:1349px;top:32px"><use href="#i-copy"/></svg>
<div class="a" style="left:1369px;top:29px;width:348px;height:22px;background:linear-gradient(90deg,#3a7cca 0%,#4f8ad0 20%,#86acdc 50%,#b6cce6 75%,#dfe8f2 100%)"></div>

<svg class="ic" style="left:1370px;top:31px"><use href="#i-result"/></svg>
<div class="t" style="left:1391px;top:34px;color:#fff;font-size:12.4px">Analysis</div>
<svg style="left:1675px;top:33px" width="16" height="14"><use href="#i-max"/></svg>
<svg style="left:1699px;top:35px" width="10" height="10"><use href="#i-x"/></svg>
<div class="box" style="left:1371px;top:52px;width:345px;height:976px"></div>
<div class="a" style="left:1382px;top:64px;width:322px;height:118px;background:#f0f0f0;border:1px solid #a8a8a8;border-top:0"></div>
<div class="a" style="left:1382px;top:64px;width:322px;height:25px;background:linear-gradient(90deg,#dcdde2,#e6e7ea 50%,#f0f0f2)"></div>
<div class="a" style="left:1382px;top:64px;width:2px;height:1px;background:#4a8ad8"></div><div class="a" style="left:1702px;top:64px;width:2px;height:1px;background:#4a8ad8"></div>
<div class="t" style="left:1393px;top:70px;font-weight:bold;font-size:11.2px">List of Finalists</div>
<svg class="ic" style="left:1678px;top:68px"><use href="#i-collapse"/></svg>
<svg class="ic" style="left:1394px;top:99px"><use href="#i-fin"/></svg>
<div class="t" style="left:1414px;top:101px;font-size:11.8px">List of Finalists</div>
<svg class="ic" style="left:1394px;top:117px"><use href="#i-fin"/></svg>
<div class="t" style="left:1414px;top:119px;font-size:11.8px">List of Finalists - Finals not done yet</div>
<svg class="ic" style="left:1394px;top:135px"><use href="#i-fin"/></svg>
<div class="t" style="left:1414px;top:137px;font-size:11.8px">List of Finalists by selection</div>
<svg class="ic" style="left:1394px;top:153px"><use href="#i-fin"/></svg>
<div class="t" style="left:1414px;top:155px;font-size:11.8px">List of Finalists and 3rd Places</div>
<div class="a" style="left:1382px;top:196px;width:322px;height:64px;background:#f0f0f0;border:1px solid #a8a8a8;border-top:0"></div>
<div class="a" style="left:1382px;top:196px;width:322px;height:25px;background:linear-gradient(90deg,#dcdde2,#e6e7ea 50%,#f0f0f2)"></div>
<div class="a" style="left:1382px;top:196px;width:2px;height:1px;background:#4a8ad8"></div><div class="a" style="left:1702px;top:196px;width:2px;height:1px;background:#4a8ad8"></div>
<div class="t" style="left:1393px;top:202px;font-weight:bold;font-size:11.2px">Award ceremony done</div>
<svg class="ic" style="left:1678px;top:200px"><use href="#i-collapse"/></svg>
<svg class="ic" style="left:1394px;top:231px"><use href="#i-award"/></svg>
<div class="t" style="left:1414px;top:233px;font-size:11.8px">Award ceremony done</div>
<div class="a" style="left:1382px;top:274px;width:322px;height:174px;background:#f0f0f0;border:1px solid #a8a8a8;border-top:0"></div>
<div class="a" style="left:1382px;top:274px;width:322px;height:25px;background:linear-gradient(90deg,#dcdde2,#e6e7ea 50%,#f0f0f2)"></div>
<div class="a" style="left:1382px;top:274px;width:2px;height:1px;background:#4a8ad8"></div><div class="a" style="left:1702px;top:274px;width:2px;height:1px;background:#4a8ad8"></div>
<div class="t" style="left:1393px;top:280px;font-weight:bold;font-size:11.2px">Results</div>
<svg class="ic" style="left:1678px;top:278px"><use href="#i-collapse"/></svg>
<svg class="ic" style="left:1394px;top:309px"><use href="#i-enter"/></svg>
<div class="t" style="left:1414px;top:311px;font-size:11.8px">Enter results / Edit</div>
<svg class="ic" style="left:1394px;top:327px"><use href="#i-result"/></svg>
<div class="t" style="left:1414px;top:329px;font-size:11.8px">Results</div>
<svg class="ic" style="left:1394px;top:345px"><use href="#i-csv"/></svg>
<div class="t" style="left:1414px;top:347px;font-size:11.8px">Results - Save as CSV file</div>
<svg class="ic" style="left:1394px;top:363px"><use href="#i-result"/></svg>
<div class="t" style="left:1414px;top:365px;font-size:11.8px">Results from Club</div>
<svg class="ic" style="left:1394px;top:381px"><use href="#i-result"/></svg>
<div class="t" style="left:1414px;top:383px;font-size:11.8px">Results by selection</div><div class="t" style="left:1502px;top:406px;font-size:11.8px">Other Template</div><div class="a" style="left:1426px;top:427px;width:234px;height:7px;border:1px solid #b8b8b8;border-bottom:0"></div>
<div class="a" style="left:1382px;top:462px;width:322px;height:338px;background:#f0f0f0;border:1px solid #a8a8a8;border-top:0"></div>
<div class="a" style="left:1382px;top:462px;width:322px;height:25px;background:linear-gradient(90deg,#dcdde2,#e6e7ea 50%,#f0f0f2)"></div>
<div class="a" style="left:1382px;top:462px;width:2px;height:1px;background:#4a8ad8"></div><div class="a" style="left:1702px;top:462px;width:2px;height:1px;background:#4a8ad8"></div>
<div class="t" style="left:1393px;top:468px;font-weight:bold;font-size:11.2px">Medals</div>
<svg class="ic" style="left:1678px;top:466px"><use href="#i-collapse"/></svg>
<svg class="ic" style="left:1394px;top:519px"><use href="#i-medal"/></svg>
<div class="t" style="left:1414px;top:521px;font-size:11.8px">Medals</div>
<svg class="ic" style="left:1394px;top:537px"><use href="#i-medal"/></svg>
<div class="t" style="left:1414px;top:539px;font-size:11.8px">Medals incl. 5. Place / incl. 7. Place</div>
<svg class="ic" style="left:1394px;top:555px"><use href="#i-medal"/></svg>
<div class="t" style="left:1414px;top:557px;font-size:11.8px">Medals Others</div>
<svg class="ic" style="left:1394px;top:591px"><use href="#i-medal"/></svg>
<div class="t" style="left:1414px;top:593px;font-size:11.8px">Medals of nations</div>
<svg class="ic" style="left:1394px;top:609px"><use href="#i-medal"/></svg>
<div class="t" style="left:1414px;top:611px;font-size:11.8px">Medals of nations incl. 5. Place / incl. 7. Place</div>
<svg class="ic" style="left:1394px;top:627px"><use href="#i-medal"/></svg>
<div class="t" style="left:1414px;top:629px;font-size:11.8px">Medals of nations Others</div>
<svg class="ic" style="left:1394px;top:663px"><use href="#i-medal"/></svg>
<div class="t" style="left:1414px;top:665px;font-size:11.8px">Medals State / Region</div>
<svg class="ic" style="left:1394px;top:681px"><use href="#i-medal"/></svg>
<div class="t" style="left:1414px;top:683px;font-size:11.8px">Medals State / Region incl. 5. Place / incl. 7. Place</div>
<svg class="ic" style="left:1394px;top:699px"><use href="#i-medal"/></svg>
<div class="t" style="left:1414px;top:701px;font-size:11.8px">Medals State / Region Others</div>
<svg class="ic" style="left:1394px;top:735px"><use href="#i-medal"/></svg>
<div class="t" style="left:1414px;top:737px;font-size:11.8px">Medals Competitors</div>
<svg class="ic" style="left:1394px;top:753px"><use href="#i-medal"/></svg>
<div class="t" style="left:1414px;top:755px;font-size:11.8px">Medals Competitors incl. 5. Place / incl. 7. Place</div>
<svg class="ic" style="left:1394px;top:771px"><use href="#i-medal"/></svg>
<div class="t" style="left:1414px;top:773px;font-size:11.8px">Medals Competitors Others</div><div class="a" style="left:1396px;top:501px;width:13px;height:13px;background:#fff;border:1px solid #333;border-radius:2px"></div><div class="t" style="left:1414px;top:502px;font-size:11.8px">Select category filter for medal statistics from list</div>
<div class="a" style="left:1382px;top:814px;width:322px;height:82px;background:#f0f0f0;border:1px solid #a8a8a8;border-top:0"></div>
<div class="a" style="left:1382px;top:814px;width:322px;height:25px;background:linear-gradient(90deg,#dcdde2,#e6e7ea 50%,#f0f0f2)"></div>
<div class="a" style="left:1382px;top:814px;width:2px;height:1px;background:#4a8ad8"></div><div class="a" style="left:1702px;top:814px;width:2px;height:1px;background:#4a8ad8"></div>
<div class="t" style="left:1393px;top:820px;font-weight:bold;font-size:11.2px">Protest</div>
<svg class="ic" style="left:1678px;top:818px"><use href="#i-collapse"/></svg>
<svg class="ic" style="left:1394px;top:849px"><use href="#i-video"/></svg>
<div class="t" style="left:1414px;top:851px;font-size:11.8px">Video Review Statistic</div>
<svg class="ic" style="left:1394px;top:867px"><use href="#i-video"/></svg>
<div class="t" style="left:1414px;top:869px;font-size:11.8px">Video Review Statistic - Complete</div>
<div class="a" style="left:1382px;top:910px;width:322px;height:64px;background:#f0f0f0;border:1px solid #a8a8a8;border-top:0"></div>
<div class="a" style="left:1382px;top:910px;width:322px;height:25px;background:linear-gradient(90deg,#dcdde2,#e6e7ea 50%,#f0f0f2)"></div>
<div class="a" style="left:1382px;top:910px;width:2px;height:1px;background:#4a8ad8"></div><div class="a" style="left:1702px;top:910px;width:2px;height:1px;background:#4a8ad8"></div>
<div class="t" style="left:1393px;top:916px;font-weight:bold;font-size:11.2px">Match Duration Export</div>
<svg class="ic" style="left:1678px;top:914px"><use href="#i-collapse"/></svg>
<svg class="ic" style="left:1394px;top:945px"><use href="#i-alarm"/></svg>
<div class="t" style="left:1414px;top:947px;font-size:11.8px">Match Duration Export</div>
<svg style="left:1349px;top:1034px" width="16" height="14"><use href="#i-max"/></svg>
<svg class="ic" style="left:1373px;top:1034px"><use href="#i-offcats"/></svg>
<div class="t" style="left:1396px;top:1036px;font-size:11.5px">Officials Categories, Coach, Referee, Press</div>
<div class="a" style="left:1621px;top:1032px;width:1px;height:20px;background:#c8c8c8"></div>
<div class="a" style="left:1624px;top:1030px;width:75px;height:24px;background:#cdcdcd"></div>

<svg class="ic" style="left:1627px;top:1034px"><use href="#i-result"/></svg>
<div class="t" style="left:1650px;top:1036px;font-size:12px">Analysis</div>


<!-- RESULTS BY SELECTION DIALOG -->
<div class="a" style="left:467px;top:190px;width:586px;height:693px;background:#f2f2f2;border:1px solid #9a9a9a;box-shadow:0 0 14px rgba(0,0,0,.28)"></div>
<svg class="ic" style="left:476px;top:198px"><use href="#i-logo"/></svg>
<svg class="ic" style="left:508px;top:198px"><use href="#i-folder"/></svg>
<div class="t" style="left:530px;top:200px">File</div>
<svg style="left:564px;top:197px" width="16" height="17"><use href="#i-edit"/></svg>
<div class="t" style="left:586px;top:200px">Edit</div>
<div class="t" style="left:709px;top:200px;color:#8a8a8a">Results by selection</div>
<div class="a" style="left:936px;top:206px;width:11px;height:1px;background:#8a8a8a"></div>
<div class="a" style="left:981px;top:201px;width:10px;height:10px;border:1px solid #8a8a8a"></div>
<svg style="left:1025px;top:201px" width="10" height="10"><path d="M0 0l10 10M10 0l-10 10" stroke="#8a8a8a" stroke-width="1"/></svg>
<div class="a" style="left:470px;top:224px;width:580px;height:22px;background:#fff;border:1px solid #bdbdbd"></div>
<div class="a" style="left:470px;top:250px;width:580px;height:24px;background:linear-gradient(#fdfdfd,#ececec);border:1px solid #c4c4c4;border-radius:3px"></div>
<svg style="left:1034px;top:259px" width="10" height="6"><path d="M0 0h10l-5 5z" fill="#6a6a6a"/></svg>
<div class="a" style="left:456px;top:239px;width:11px;height:26px;background:linear-gradient(90deg,#8a8e94,#6a6e74);border-radius:4px 0 0 0"></div>
<div class="a" style="left:470px;top:780px;width:580px;height:64px;background:#fff;border:1px solid #bdbdbd"></div>
<div class="a" style="left:601px;top:853px;width:76px;height:22px;background:#fff;border:1px solid #c4c4c4;border-radius:3px"></div>
<div class="t" style="left:615px;top:857px">Select all</div>
<div class="t" style="left:684px;top:857px">Number: 2</div>
<div class="a" style="left:747px;top:853px;width:76px;height:22px;background:#fff;border:1px solid #c4c4c4;border-radius:3px"></div>
<div class="t" style="left:777px;top:857px">OK</div>
<div class="a" style="left:832px;top:853px;width:86px;height:22px;background:#fff;border:1px solid #c4c4c4;border-radius:3px"></div>
<svg class="ic" style="left:846px;top:856px;width:14px;height:14px"><use href="#i-refresh"/></svg>
<div class="t" style="left:864px;top:857px">Refresh</div>

<!-- FORMAT-OPTION DIALOG -->
<div class="a" style="left:418px;top:265px;width:685px;height:543px;background:#f2f2f2;border:1px solid #8a8a8a;border-bottom-color:#5a5a5a;box-shadow:0 2px 16px rgba(0,0,0,.32)"></div>
<svg class="ic" style="left:426px;top:273px"><use href="#i-logo"/></svg>
<div class="t" style="left:450px;top:275px;font-size:12.4px">Format-Option</div>
<div class="a" style="left:987px;top:280px;width:10px;height:1px;background:#111"></div>
<div class="a" style="left:1031px;top:276px;width:10px;height:10px;border:1px solid #111"></div>
<svg style="left:1075px;top:276px" width="10" height="10"><path d="M0 0l10 10M10 0l-10 10" stroke="#111" stroke-width="1.1"/></svg>
<div class="t" style="left:688px;top:306px;font-size:15.8px;line-height:16px;font-weight:bold">View- / Save format</div>
<div class="a" style="left:540px;top:339px;width:439px;height:324px;border:1px solid #c4c4c4"></div>
<div class="a" style="left:544px;top:333px;width:42px;height:12px;background:#f2f2f2"></div>
<div class="t" style="left:546px;top:333px;font-size:10.4px;line-height:12px;font-weight:bold">Options</div>
<div class="t" style="left:543px;top:355px">Format of view and file:</div>
<div class="a" style="left:689px;top:354px;width:15px;height:15px;border-radius:50%;background:#4a90e2;border:1px solid #3a80d2"></div>
<div class="a" style="left:694px;top:359px;width:5px;height:5px;border-radius:50%;background:#fff"></div>
<div class="t" style="left:708px;top:355px;font-size:11.6px">Preview</div>
<div class="a" style="left:833px;top:354px;width:15px;height:15px;border-radius:50%;background:#fff;border:1px solid #8c8c8c"></div>
<div class="t" style="left:852px;top:355px;font-size:11.6px">PDF</div>
<div class="a" style="left:689px;top:380px;width:15px;height:15px;border-radius:50%;background:#fff;border:1px solid #8c8c8c"></div>
<div class="t" style="left:708px;top:381px;font-size:11.6px">RTF (MS Word)</div>
<div class="a" style="left:833px;top:380px;width:15px;height:15px;border-radius:50%;background:#fff;border:1px solid #8c8c8c"></div>
<div class="t" style="left:852px;top:381px;font-size:11.6px">Text</div>
<div class="t" style="left:543px;top:407px">Display place:</div>
<div class="a" style="left:689px;top:402px;width:140px;height:22px;background:#fff;border:1px solid #b4b4b4;border-radius:3px"></div>
<div class="t" style="left:696px;top:407px">All</div>
<svg style="left:813px;top:411px" width="10" height="6"><path d="M0 0h10l-5 5.5z" fill="#666"/></svg>
<div class="t" style="left:548px;top:516px">Report Name</div>
<div class="a" style="left:625px;top:511px;width:344px;height:22px;background:#fff;border:1px solid #b4b4b4"></div>
<div class="a" style="left:681px;top:776px;width:76px;height:26px;border:2px solid #92bbe8;border-radius:4px"></div>
<div class="a" style="left:683px;top:778px;width:72px;height:22px;background:#e4e4e4;border:1px solid #a0a0a0;border-radius:2px"></div>
<div class="t" style="left:707px;top:783px">Next</div>
<div class="a" style="left:764px;top:778px;width:72px;height:22px;background:#fff;border:1px solid #c4c4c4;border-radius:3px"></div>
<div class="t" style="left:781px;top:783px">Cancel</div>

<!-- PINK ARROW -->
<svg style="left:0;top:0" width="1720" height="1080" viewBox="0 0 1720 1080">
  <path d="M836 533 L868 653 L1002 685 L734 789 Z" fill="#fafafa" stroke="#fafafa" stroke-width="2" stroke-linejoin="round"/>
  <path d="M834 544.5 L861.5 660 L977 686.5 L748.7 774.5 Z" fill="#ee8484"/>
</svg>

<!-- STATUS BAR -->
<div class="a" style="left:0;top:1057px;width:1720px;height:21px;background:linear-gradient(#9c9c9e 0,#c4c5c9 1px,#dcdde2 3px,#dfe0e5 8px,#dadbe0 16px,#cfd0d4 21px)"></div>
<svg style="left:1704px;top:1066px" width="16" height="14"><g fill="#f8f8f8"><rect x="11" y="1" width="3" height="3"/><rect x="7" y="5" width="3" height="3"/><rect x="11" y="5" width="3" height="3"/><rect x="3" y="9" width="3" height="3"/><rect x="7" y="9" width="3" height="3"/><rect x="11" y="9" width="3" height="3"/></g><g fill="#a8a8a8"><rect x="10" y="0" width="2" height="2"/><rect x="6" y="4" width="2" height="2"/><rect x="10" y="4" width="2" height="2"/><rect x="2" y="8" width="2" height="2"/><rect x="6" y="8" width="2" height="2"/><rect x="10" y="8" width="2" height="2"/></g></svg>
<div class="t" style="left:5px;top:1062px;font-size:10.4px;font-weight:bold">2025-02-18 11:19:31:814 [INFO] Messages found 0</div>
<div class="a" style="left:136px;top:1078px;width:1584px;height:2px;background:#3a3a3a"></div>

</body></html>
